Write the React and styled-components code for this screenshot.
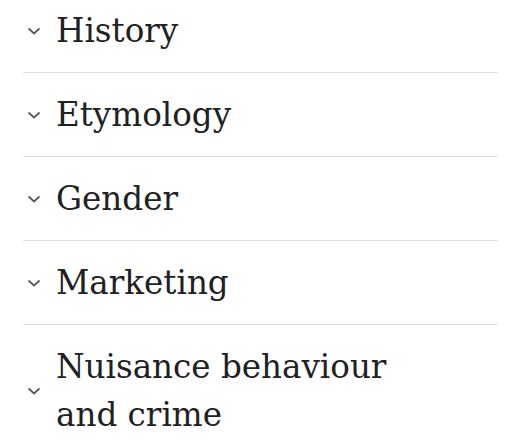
import React from "react";
import styled, { createGlobalStyle } from "styled-components";

const GlobalStyle = createGlobalStyle`
  html, body {
    margin: 0;
    padding: 0;
    background: #ffffff;
  }
  body {
    overflow: hidden;
  }
`;

const Page = styled.div`
  width: 522px;
  height: 442px;
  overflow: hidden;
  padding: 0 24px 0 23px;
  box-sizing: border-box;
`;

const List = styled.div`
  display: flex;
  flex-direction: column;
  margin-top: -11px;
`;

const Section = styled.section`
  border-bottom: ${(p) => (p.$last ? "none" : "1px solid #dcdee2")};
`;

const Heading = styled.h2`
  display: flex;
  align-items: center;
  margin: 0;
  padding: 18px 0 17px;
  font-family: "DejaVu Serif", "Liberation Serif", serif;
  font-weight: normal;
  font-size: 32.6px;
  line-height: 48px;
  color: #202122;
`;

const Chevron = styled.span`
  display: flex;
  align-items: center;
  justify-content: flex-start;
  width: 33px;
  flex: none;
  padding-left: 2px;
  box-sizing: border-box;
  color: #54595d;
`;

const Title = styled.span`
  max-width: 360px;
`;

const ChevronIcon = () => (
  <svg width="18" height="16" viewBox="0 0 18 16" fill="none">
    <path d="M3.5 5.5l5.5 5 5.5-5" stroke="currentColor" strokeWidth="1.7" />
  </svg>
);

const sections = [
  "History",
  "Etymology",
  "Gender",
  "Marketing",
  "Nuisance behaviour and crime",
];

export default function App() {
  return (
    <>
      <GlobalStyle />
      <Page>
        <List>
          {sections.map((s, i) => (
            <Section key={s} $last={i === sections.length - 1}>
              <Heading>
                <Chevron>
                  <ChevronIcon />
                </Chevron>
                <Title>{s}</Title>
              </Heading>
            </Section>
          ))}
        </List>
      </Page>
    </>
  );
}
